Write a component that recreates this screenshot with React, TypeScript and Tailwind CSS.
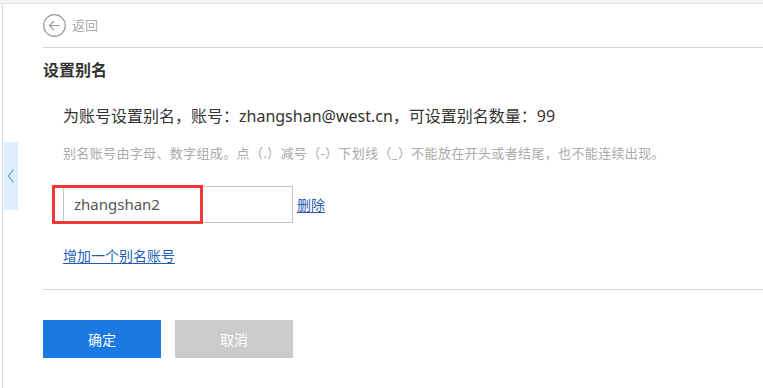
import React from "react";

const font = { fontFamily: '"Noto Sans", "Noto Sans CJK SC", sans-serif' };

const BackIcon = () => (
  <svg width="23" height="23" viewBox="0 0 23 23" fill="none" stroke="#9a9a9a" strokeWidth="1.2">
    <circle cx="11.5" cy="11.5" r="10.8" />
    <path d="M6.5 11.5h10M10.5 7.5l-4 4 4 4" strokeLinecap="round" strokeLinejoin="round" />
  </svg>
);

const App: React.FC = () => {
  return (
    <div className="w-[763px] h-[388px] bg-white overflow-hidden flex flex-col" style={font}>
      {/* top strip */}
      <div className="h-[4px] shrink-0 bg-[#f2f2f2] border-b border-[#e0e0e0]" />

      <div className="flex flex-1">
        {/* collapsed side */}
        <div className="w-[2px]" />
        <div className="w-px bg-[#d6dae2]" />
        <div className="w-px" />
        <div className="w-[14px]">
          <div className="mt-[138px] h-[68px] bg-[#deeefc] flex items-center justify-center">
            <svg width="8" height="16" viewBox="0 0 8 16" fill="none" stroke="#6a9bd6" strokeWidth="1.2">
              <path d="M6.5 1.5L1.5 8l5 6.5" />
            </svg>
          </div>
        </div>

        {/* main */}
        <div className="flex-1 pl-[25px]">
          <div className="h-[44px] flex items-center gap-[6px] border-b border-[#d4d4d4]">
            <BackIcon />
            <span className="text-[13px] text-[#aaaaaa]">返回</span>
          </div>

          <h2 className="mt-[10px] text-[16px] leading-[24px] font-bold text-[#333333]">设置别名</h2>

          <div className="border-b border-[#d4d4d4] pb-[22px]">
            <p className="mt-[22px] pl-[20px] text-[16px] leading-[24px] text-[#333333]">
              为账号设置别名，账号：zhangshan@west.cn，可设置别名数量：99
            </p>
            <p className="mt-[15px] pl-[20px] text-[13px] leading-[20px] tracking-[0.35px] text-[#aaaaaa]">
              别名账号由字母、数字组成。点（.）减号（-）下划线（_）不能放在开头或者结尾，也不能连续出现。
            </p>

            <div className="mt-[23px] pl-[9px] flex items-center">
              <div className="relative w-[241px] h-[37px] border border-[#c4c4c4] pl-[10px] py-[1px]">
                <div className="h-full border-l border-[#c4c4c4] pl-[10px] flex items-center text-[15px] text-[#555555]">
                  zhangshan2
                </div>
                <div className="absolute left-[-1px] top-[-2px] w-[151px] h-[39px] border-[3px] border-[#f23535]" />
              </div>
              <a className="ml-[4px] text-[14px] text-[#2a5bb5] underline underline-offset-2 cursor-pointer">删除</a>
            </div>

            <div className="mt-[20px] pl-[20px]">
              <a className="text-[14px] leading-[20px] text-[#1f5fb5] underline underline-offset-2 cursor-pointer">
                增加一个别名账号
              </a>
            </div>
          </div>

          <div className="mt-[30px] flex gap-[14px]">
            <button className="w-[118px] h-[38px] bg-[#1a79e2] text-white text-[14px]">确定</button>
            <button className="w-[118px] h-[38px] bg-[#cbcbcb] text-white text-[14px]">取消</button>
          </div>
        </div>
      </div>
    </div>
  );
};

export default App;
